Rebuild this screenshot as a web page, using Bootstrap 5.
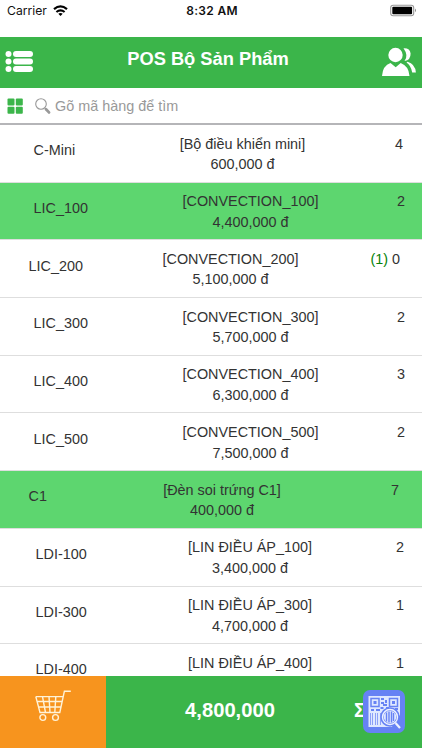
<!DOCTYPE html>
<html lang="vi">
<head>
<meta charset="utf-8">
<meta name="viewport" content="width=device-width, initial-scale=1">
<title>POS Bộ Sản Phẩm</title>
<link rel="stylesheet" href="https://cdn.jsdelivr.net/npm/bootstrap@5.3.0/dist/css/bootstrap.min.css">
<style>
body{font-family:"Liberation Sans",Arial,sans-serif;color:#333;background:#fff}
svg{display:block;flex:none}
.screen{height:750px}
.status{height:37px;font-family:Inter,sans-serif;color:#111;font-size:12px;line-height:22px;padding:0 5px 0 7px}
.side{flex:1 1 0}
.carrier{gap:6px;font-size:12.2px}
.clock{font-weight:600;letter-spacing:.3px}
.topbar{height:51px;background:#3bb54a;padding:0 6px 2px 5px}
.title{font-size:18.3px;line-height:22px;padding-bottom:5px}
.search{height:37px;border-bottom:2px solid #b5b5b8;padding:1px 0 0 7px}
.lens{margin-left:12px}
.search input{font-size:14.4px;line-height:18px;color:#333;outline:0}
.search input::placeholder{color:#999;opacity:1}
.product{height:57.7px;border-bottom:1.5px solid #dedede;font-size:14.4px;line-height:20.5px}
.picked{background:#5dd66f}
.code{width:110px;padding:15.2px 0 0 33.6px}
.label{width:281px;padding-top:8.6px}
.qty{padding:8.6px 17px 0 0}
.r-mini .label{width:265px}.r-mini .qty{padding-right:19px}
.r-200 .code{padding-left:28.6px}.r-200 .label{width:241px}.r-200 .qty{padding-right:22px}
.r-c1 .code{padding-left:28.6px}.r-c1 .label{width:224px}.r-c1 .qty{padding-right:23px}
.r-ldi .code{padding-left:35.6px}.r-ldi .label{width:280px}.r-ldi .qty{padding-right:18px}
.added{color:#078207}
.totalbar{height:72px;margin-bottom:2px;background:#3bb54a;flex:none}
.cart{width:106px;background:#f7941e;padding:12px 0 0 35px}
.amount{width:248px;font-size:20.2px;line-height:24px;padding-top:22px}
.sigma{font-size:20px;line-height:24px;padding-top:22px}
.scan{right:17px;top:14px}
</style>
</head>
<body class="overflow-hidden">
<div class="screen d-flex flex-column overflow-hidden">
  <div class="status d-flex justify-content-between flex-shrink-0">
    <div class="side carrier d-flex"><span>Carrier</span>
      <svg width="15" height="22" viewBox="0 0 15 22" fill="none" stroke="#000" stroke-width="2.2"><path d="M1 9.1q6.5-5.5 13 0M3.4 12q4.1-3.3 8.2 0"/><path d="M5.3 13.700q2.200-1.500 4.400 0L7.500 16z" fill="#000" stroke="none"/></svg>
    </div>
    <span class="clock">8:32 AM</span>
    <div class="side d-flex justify-content-end">
      <svg width="27" height="22" viewBox="0 0 27 22"><rect x=".7" y="5.2" width="23" height="10.5" rx="2.5" fill="#fff" stroke="#999" stroke-width="1.1"/><rect x="2.3" y="6.8" width="19.8" height="7.4" rx="1"/><path d="M25 8.5q2 1.8 0 3.800z" fill="#888"/></svg>
    </div>
  </div>
  <header class="topbar d-flex align-items-center justify-content-between text-white flex-shrink-0">
    <svg width="29" height="22" viewBox="0 0 29 22" fill="#fff"><circle cx="3.5" cy="3" r="3"/><circle cx="3.5" cy="10.5" r="3"/><circle cx="3.5" cy="18" r="3"/><rect x="8" width="20" height="6" rx="3"/><rect x="8" y="7.5" width="20" height="6" rx="3"/><rect x="8" y="15" width="20" height="6" rx="3"/></svg>
    <h1 class="title fw-bold m-0">POS Bộ Sản Phẩm</h1>
    <svg width="34" height="30" viewBox="0 0 34 30" fill="#fff"><circle cx="13.500" cy="8" r="7.200"/><path d="M0 29Q.8 18.500 8.500 16l5.200 4.300 5-4.300Q26.800 19 27.500 29z"/><path d="M21.500 1.200Q28 .8 28.600 6.500q.2 6.500-6.100 7.600 4.300-5.600-1-12.900M25.500 14.700q7.700 2.100 8.400 10.800h-3.700Q29 18.600 24.500 15.600z"/></svg>
  </header>
  <div class="search d-flex align-items-center flex-shrink-0">
    <svg width="16" height="16" viewBox="0 0 16 16" fill="#3bb54a"><rect x=".5" y=".5" width="7" height="7" rx="1"/><rect x="8.8" y=".5" width="7" height="7" rx="1"/><rect x=".5" y="8.7" width="7" height="7" rx="1"/><rect x="8.8" y="8.7" width="7" height="7" rx="1"/></svg>
    <svg class="lens" width="16" height="17" viewBox="0 0 16 17" fill="none" stroke="#999"><circle cx="6" cy="6" r="5.3" stroke-width="1.1"/><path d="M9.8 10l1.2 1"/><path d="M11 11.2l3 3.2" stroke-width="2.8" stroke-linecap="round"/></svg>
    <input class="border-0 p-0 ms-1 flex-grow-1 bg-transparent" type="text" placeholder="Gõ mã hàng để tìm">
  </div>
  <main class="flex-grow-1 overflow-hidden">
    <div class="product d-flex r-mini"><div class="code">C-Mini</div><div class="label text-center">[Bộ điều khiển mini]<br>600,000 đ</div><div class="qty ms-auto">4</div></div>
    <div class="product d-flex picked"><div class="code">LIC_100</div><div class="label text-center">[CONVECTION_100]<br>4,400,000 đ</div><div class="qty ms-auto">2</div></div>
    <div class="product d-flex r-200"><div class="code">LIC_200</div><div class="label text-center">[CONVECTION_200]<br>5,100,000 đ</div><div class="qty ms-auto"><span class="added">(1)</span> 0</div></div>
    <div class="product d-flex"><div class="code">LIC_300</div><div class="label text-center">[CONVECTION_300]<br>5,700,000 đ</div><div class="qty ms-auto">2</div></div>
    <div class="product d-flex"><div class="code">LIC_400</div><div class="label text-center">[CONVECTION_400]<br>6,300,000 đ</div><div class="qty ms-auto">3</div></div>
    <div class="product d-flex"><div class="code">LIC_500</div><div class="label text-center">[CONVECTION_500]<br>7,500,000 đ</div><div class="qty ms-auto">2</div></div>
    <div class="product d-flex picked r-c1"><div class="code">C1</div><div class="label text-center">[Đèn soi trứng C1]<br>400,000 đ</div><div class="qty ms-auto">7</div></div>
    <div class="product d-flex r-ldi"><div class="code">LDI-100</div><div class="label text-center">[LIN ĐIỀU ÁP_100]<br>3,400,000 đ</div><div class="qty ms-auto">2</div></div>
    <div class="product d-flex r-ldi"><div class="code">LDI-300</div><div class="label text-center">[LIN ĐIỀU ÁP_300]<br>4,700,000 đ</div><div class="qty ms-auto">1</div></div>
    <div class="product d-flex r-ldi"><div class="code">LDI-400</div><div class="label text-center">[LIN ĐIỀU ÁP_400]</div><div class="qty ms-auto">1</div></div>
  </main>
  <footer class="totalbar d-flex position-relative text-white">
    <div class="cart">
      <svg width="38" height="34" viewBox="0 0 38 34" fill="none" stroke="#fff3d8" stroke-width="1.4"><path d="M.8 8.600h26.800M35.800 3.200h-6.400L24.800 24.500H5L.8 8.600M2.200 13.500h24.900M3.500 19h22.400M7.500 8.600l3 15.900M14 8.600l1 15.900M20.800 8.600l-1 15.900"/><circle cx="7.800" cy="29.500" r="2.900"/><circle cx="20.500" cy="29.500" r="2.900"/></svg>
    </div>
    <div class="amount text-center fw-bold">4,800,000</div>
    <div class="sigma fw-bold">Σ</div>
    <div class="scan position-absolute">
      <svg width="42" height="43" viewBox="0 0 42 43"><rect width="42" height="43" rx="7" fill="#6682f4"/><rect x="5.500" y="6" width="31.500" height="31" fill="#dfe8ff"/>
      <g fill="none" stroke="#6682f4" stroke-width="1.500"><path d="M8 8.500h8v8H8zM26.500 8.500h8v8h-8z"/></g>
      <path fill="#6682f4" d="M10.500 11h3v3h-3zM29 11h3v3h-3zM18 8h3v2h-3zM22 10h2v3h-2zM18 12h3v2h-3zM20 14h4v2h-4zM17.500 17h3v2h-3zM23 17h3v2h-3zM8 19h3v2H8zM13 19h4v2h-4zM28 19h2v2h-2zM32 18h3v2h-3z"/>
      <path stroke="#6682f4" stroke-opacity=".7" d="M7.500 23v12M9.500 23v12M12.500 23v12M14.500 23v12M17.500 23v12"/>
      <path fill="#6682f4" d="M31 32l6-7v12h-8z"/>
      <circle cx="27" cy="27" r="8" fill="#dfe8ff" stroke="#6682f4" stroke-width="3.500"/><path stroke="#6682f4" stroke-width="1.400" d="M23.500 22.500v9M26 21.500v11M28.500 21.500v11M30.500 23v8"/><circle cx="27" cy="27" r="7.500" fill="none" stroke="#eef3ff" stroke-width="1.400"/><path d="M32.500 33l4.500 5" stroke="#eef3ff" stroke-width="2.200"/></svg>
    </div>
  </footer>
</div>
<script src="https://cdn.jsdelivr.net/npm/bootstrap@5.3.0/dist/js/bootstrap.bundle.min.js"></script>
</body>
</html>
